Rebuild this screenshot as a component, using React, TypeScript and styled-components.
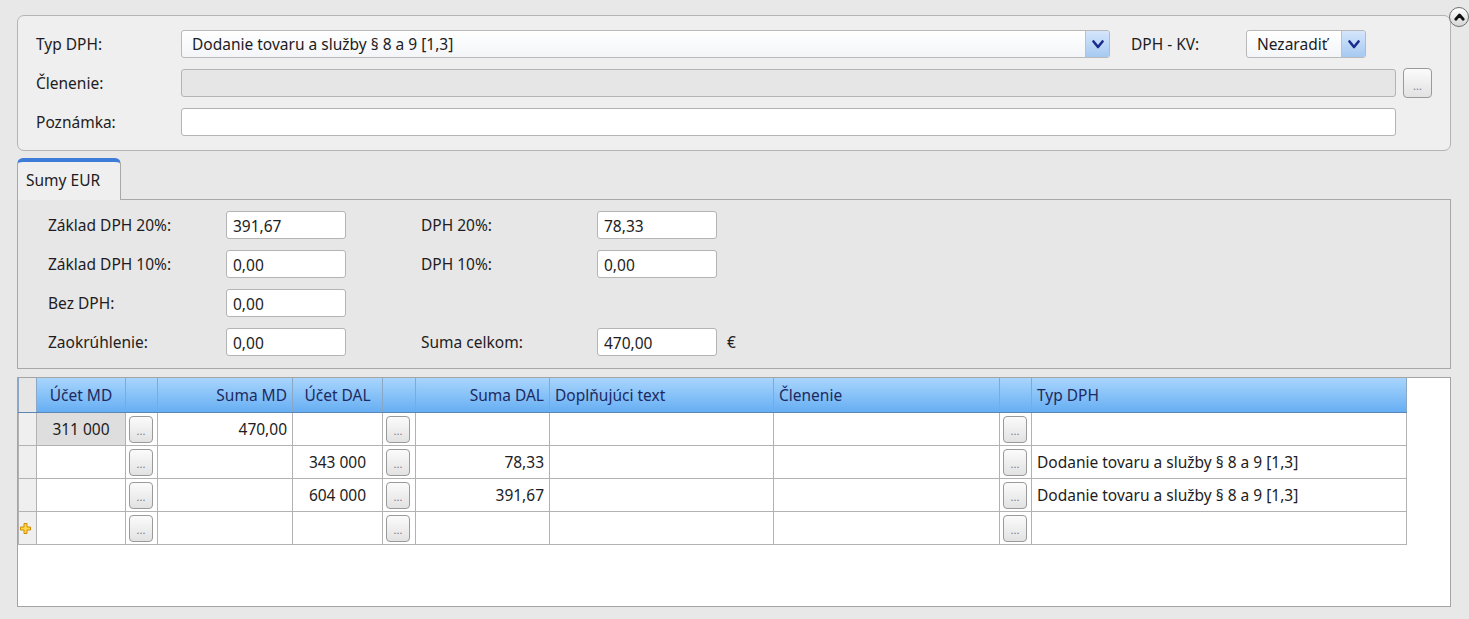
import React from "react";
import styled, { createGlobalStyle } from "styled-components";

const GlobalStyle = createGlobalStyle`
  html, body {
    margin: 0;
    padding: 0;
    background: #e8e8e8;
    font-family: "Noto Sans", "Open Sans", sans-serif;
    font-size: 15.5px;
    color: #221c22;
  }
`;

const Page = styled.div`
  padding: 15px 18px 0 17px;
  display: flex;
  flex-direction: column;
`;

// horná skupina (Typ DPH, Členenie, Poznámka)
const GroupBox = styled.div`
  position: relative;
  background: #efefef;
  border: 1px solid #b4b4b4;
  border-radius: 7px;
  padding: 14px 18px 14px 18px;
  display: flex;
  flex-direction: column;
  gap: 11px;
`;

const CollapseButton = styled.div`
  position: absolute;
  right: -19px;
  top: -9px;
  width: 20px;
  height: 20px;
  box-sizing: border-box;
  border-radius: 50%;
  border: 1px solid #6f6f6f;
  background: linear-gradient(#ffffff, #d6d6d6);
  display: flex;
  align-items: center;
  justify-content: center;
`;

const FormRow = styled.div`
  display: flex;
  align-items: center;
  height: 28px;
`;

const Label = styled.div<{ $w: number; $ml?: number }>`
  width: ${(p) => p.$w}px;
  margin-left: ${(p) => p.$ml || 0}px;
  flex-shrink: 0;
  white-space: nowrap;
`;

const Combo = styled.div<{ $w?: number }>`
  ${(p) => (p.$w ? `width: ${p.$w}px; flex-shrink: 0;` : "flex: 1;")}
  height: 28px;
  box-sizing: border-box;
  border: 1px solid #b9b9b9;
  border-radius: 3px;
  background: linear-gradient(#ffffff, #f3f5f8);
  display: flex;
  align-items: center;
  overflow: hidden;
`;

const ComboText = styled.div`
  flex: 1;
  padding-left: 10px;
  white-space: nowrap;
`;

const ComboArrow = styled.div`
  width: 23px;
  height: 100%;
  border-left: 1px solid #a9c4e4;
  background: linear-gradient(#d4e6fb, #a6c9f1);
  display: flex;
  align-items: center;
  justify-content: center;
`;

const TextField = styled.div<{ $disabled?: boolean }>`
  flex: 1;
  height: 28px;
  box-sizing: border-box;
  border: 1px solid #b4b4b4;
  border-radius: 3px;
  background: ${(p) => (p.$disabled ? "#e6e6e6" : "#ffffff")};
`;

const DotsButton = styled.div<{ $w: number; $h: number }>`
  width: ${(p) => p.$w}px;
  height: ${(p) => p.$h}px;
  box-sizing: border-box;
  flex-shrink: 0;
  border: 1px solid #9a9a9a;
  border-radius: 4px;
  background: linear-gradient(#fbfbfb, #e2e2e2);
  color: #7a7a8a;
  font-size: 11px;
  line-height: 1;
  display: flex;
  align-items: flex-end;
  justify-content: center;
  padding-bottom: 6px;
`;

const Spacer = styled.div<{ $w: number }>`
  width: ${(p) => p.$w}px;
  flex-shrink: 0;
`;

// záložky
const TabStrip = styled.div`
  margin-top: 7px;
  display: flex;
  position: relative;
  z-index: 1;
  margin-bottom: -1px;
`;

const Tab = styled.div`
  width: 104px;
  height: 42px;
  box-sizing: border-box;
  border: 1px solid #a8a8a8;
  border-bottom: none;
  border-top: 4px solid #3d7cd8;
  border-radius: 6px 6px 0 0;
  background: #efefef;
  padding: 7px 0 0 8px;
`;

const TabPanel = styled.div`
  border: 1px solid #a8a8a8;
  background: #e7e7e7;
  padding: 11px 0 12px 30px;
  display: grid;
  grid-template-columns: 178px 195px 176px 150px;
  grid-auto-rows: 28px;
  row-gap: 11px;
  align-items: center;
`;

const SumInput = styled.div`
  width: 120px;
  height: 28px;
  box-sizing: border-box;
  border: 1px solid #b4b4b4;
  border-radius: 3px;
  background: #ffffff;
  padding: 3px 0 0 6px;
`;

const SumCell = styled.div`
  display: flex;
  align-items: center;
  gap: 10px;
`;

// tabuľka
const TableBox = styled.div`
  margin-top: 8px;
  height: 230px;
  box-sizing: border-box;
  border: 1px solid #a4a4a4;
  background: #ffffff;
`;

const Grid = styled.table`
  border-collapse: collapse;
  table-layout: fixed;
`;

const HeadCell = styled.th<{ $w: number; $align?: string; $plain?: boolean }>`
  width: ${(p) => p.$w}px;
  height: 34px;
  padding: 0 5px;
  box-sizing: border-box;
  font-weight: normal;
  color: #1d2a62;
  text-align: ${(p) => p.$align || "left"};
  border: 1px solid #8aa7c6;
  border-top: none;
  border-bottom: 1px solid #5d86b3;
  background: ${(p) =>
    p.$plain ? "#e6e6e6" : "linear-gradient(#a8d5fc, #66aef3)"};
  white-space: nowrap;
`;

const Cell = styled.td<{ $align?: string; $current?: boolean; $indicator?: boolean }>`
  height: 33px;
  padding: 0 5px;
  box-sizing: border-box;
  text-align: ${(p) => p.$align || "left"};
  border: 1px solid #b2b2b2;
  background: ${(p) =>
    p.$indicator ? "#efefef" : p.$current ? "#dedede" : "#ffffff"};
  white-space: nowrap;
  vertical-align: middle;
`;

const BtnCell = styled.td`
  height: 33px;
  padding: 3px 0 0 3px;
  box-sizing: border-box;
  border: 1px solid #b2b2b2;
  vertical-align: top;
`;

const ChevronDown = () => (
  <svg width="12" height="9" viewBox="0 0 12 9">
    <polyline
      points="1.5,1.5 6,7 10.5,1.5"
      fill="none"
      stroke="#1b2d8c"
      strokeWidth="2.6"
      strokeLinecap="round"
      strokeLinejoin="round"
    />
  </svg>
);

const ChevronUp = () => (
  <svg width="11" height="8" viewBox="0 0 11 8">
    <polyline
      points="1.8,6.2 5.5,2 9.2,6.2"
      fill="none"
      stroke="#111"
      strokeWidth="2.8"
      strokeLinecap="round"
      strokeLinejoin="round"
    />
  </svg>
);

const PlusIcon = () => (
  <svg width="11" height="11" viewBox="0 0 11 11">
    <path
      d="M4 0.5h3v3.5h3.5v3h-3.5v3.5h-3v-3.5h-3.5v-3h3.5z"
      fill="#ffd54a"
      stroke="#d08a00"
      strokeWidth="1"
    />
  </svg>
);

type Row = {
  mdAcc: string;
  mdSum: string;
  dalAcc: string;
  dalSum: string;
  typ: string;
  current?: boolean;
  isNew?: boolean;
};

const rows: Row[] = [
  { mdAcc: "311 000", mdSum: "470,00", dalAcc: "", dalSum: "", typ: "", current: true },
  { mdAcc: "", mdSum: "", dalAcc: "343 000", dalSum: "78,33", typ: "Dodanie tovaru a služby § 8 a 9 [1,3]" },
  { mdAcc: "", mdSum: "", dalAcc: "604 000", dalSum: "391,67", typ: "Dodanie tovaru a služby § 8 a 9 [1,3]" },
  { mdAcc: "", mdSum: "", dalAcc: "", dalSum: "", typ: "", isNew: true },
];

const App = () => {
  return (
    <>
      <GlobalStyle />
      <Page>
        <GroupBox>
          <CollapseButton>
            <ChevronUp />
          </CollapseButton>
          <FormRow>
            <Label $w={145}>Typ DPH:</Label>
            <Combo>
              <ComboText>Dodanie tovaru a služby § 8 a 9 [1,3]</ComboText>
              <ComboArrow>
                <ChevronDown />
              </ComboArrow>
            </Combo>
            <Label $w={115} $ml={21}>DPH - KV:</Label>
            <Combo $w={120}>
              <ComboText>Nezaradiť</ComboText>
              <ComboArrow>
                <ChevronDown />
              </ComboArrow>
            </Combo>
            <Spacer $w={66} />
          </FormRow>
          <FormRow>
            <Label $w={145}>Členenie:</Label>
            <TextField $disabled />
            <Spacer $w={7} />
            <DotsButton $w={29} $h={30}>...</DotsButton>
          </FormRow>
          <FormRow>
            <Label $w={145}>Poznámka:</Label>
            <TextField />
            <Spacer $w={36} />
          </FormRow>
        </GroupBox>

        <TabStrip>
          <Tab>Sumy EUR</Tab>
        </TabStrip>
        <TabPanel>
          <div>Základ DPH 20%:</div>
          <SumInput>391,67</SumInput>
          <div>DPH 20%:</div>
          <SumInput>78,33</SumInput>

          <div>Základ DPH 10%:</div>
          <SumInput>0,00</SumInput>
          <div>DPH 10%:</div>
          <SumInput>0,00</SumInput>

          <div>Bez DPH:</div>
          <SumInput>0,00</SumInput>
          <div />
          <div />

          <div>Zaokrúhlenie:</div>
          <SumInput>0,00</SumInput>
          <div>Suma celkom:</div>
          <SumCell>
            <SumInput>470,00</SumInput>
            <span>€</span>
          </SumCell>
        </TabPanel>

        <TableBox>
          <Grid>
            <thead>
              <tr>
                <HeadCell $w={18} $plain />
                <HeadCell $w={89} $align="center">Účet MD</HeadCell>
                <HeadCell $w={32} />
                <HeadCell $w={135} $align="right">Suma MD</HeadCell>
                <HeadCell $w={90} $align="center">Účet DAL</HeadCell>
                <HeadCell $w={33} />
                <HeadCell $w={134} $align="right">Suma DAL</HeadCell>
                <HeadCell $w={224}>Doplňujúci text</HeadCell>
                <HeadCell $w={226}>Členenie</HeadCell>
                <HeadCell $w={32} />
                <HeadCell $w={375}>Typ DPH</HeadCell>
              </tr>
            </thead>
            <tbody>
              {rows.map((r, i) => (
                <tr key={i}>
                  <Cell $indicator style={{ padding: "0 0 0 1px" }}>
                    {r.isNew && <PlusIcon />}
                  </Cell>
                  <Cell $align="center" $current={r.current}>{r.mdAcc}</Cell>
                  <BtnCell>
                    <DotsButton $w={24} $h={27}>...</DotsButton>
                  </BtnCell>
                  <Cell $align="right">{r.mdSum}</Cell>
                  <Cell $align="center">{r.dalAcc}</Cell>
                  <BtnCell>
                    <DotsButton $w={24} $h={27}>...</DotsButton>
                  </BtnCell>
                  <Cell $align="right">{r.dalSum}</Cell>
                  <Cell />
                  <Cell />
                  <BtnCell>
                    <DotsButton $w={24} $h={27}>...</DotsButton>
                  </BtnCell>
                  <Cell>{r.typ}</Cell>
                </tr>
              ))}
            </tbody>
          </Grid>
        </TableBox>
      </Page>
    </>
  );
};

export default App;
